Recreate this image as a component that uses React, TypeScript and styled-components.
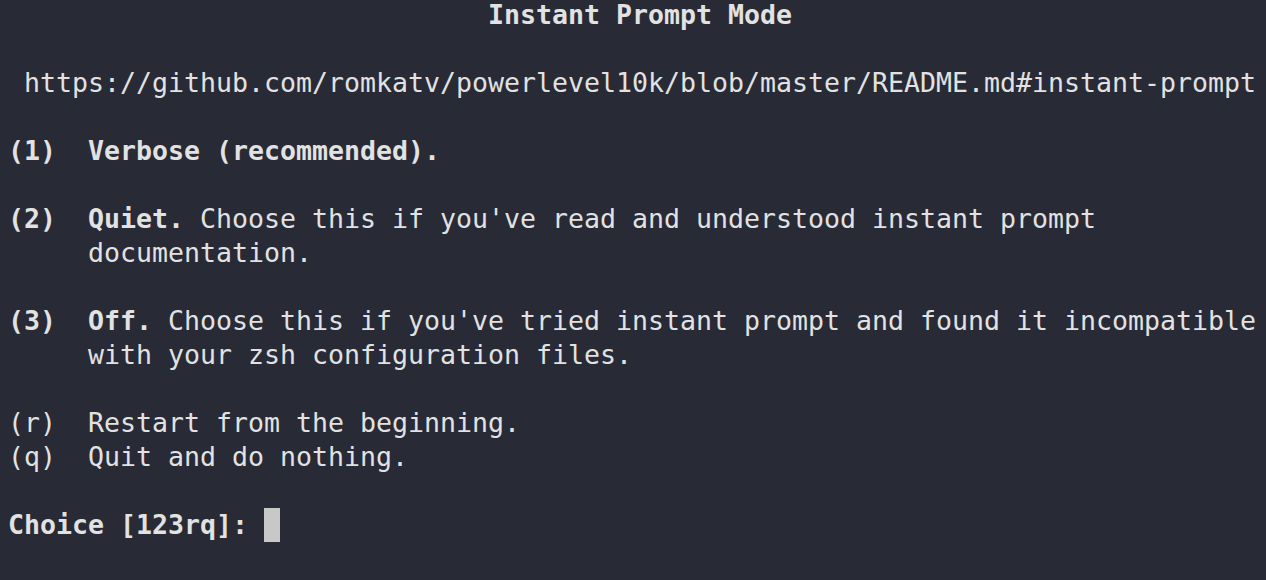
import React from "react";
import styled, { createGlobalStyle } from "styled-components";

const Global = createGlobalStyle`
  html, body {
    margin: 0;
    padding: 0;
    background: #282a36;
    overflow: hidden;
  }
`;

const Screen = styled.div`
  width: 1266px;
  height: 580px;
  box-sizing: border-box;
  background: #282a36;
  color: #e2e2e2;
  font-family: "DejaVu Sans Mono", monospace;
  font-size: 26.58px;
  padding: 0 0 0 8px;
  overflow: hidden;
`;

const Lines = styled.div`
  display: flex;
  flex-direction: column;
  margin-top: -2px;
`;

const Row = styled.div`
  height: 34px;
  line-height: 34px;
  white-space: pre;
`;

const Strong = styled.span`
  font-weight: bold;
`;

const Cursor = styled.span`
  display: inline-block;
  width: 16px;
  height: 34px;
  background: #c8c8c8;
  vertical-align: top;
`;

export default function App() {
  return (
    <>
      <Global />
      <Screen>
        <Lines>
          <Row>
            {" ".repeat(30)}
            <Strong>Instant Prompt Mode</Strong>
          </Row>
          <Row> </Row>
          <Row> https://github.com/romkatv/powerlevel10k/blob/master/README.md#instant-prompt</Row>
          <Row> </Row>
          <Row>
            <Strong>(1)  Verbose (recommended).</Strong>
          </Row>
          <Row> </Row>
          <Row>
            <Strong>(2)  Quiet.</Strong> Choose this if you've read and understood instant prompt
          </Row>
          <Row>     documentation.</Row>
          <Row> </Row>
          <Row>
            <Strong>(3)  Off.</Strong> Choose this if you've tried instant prompt and found it incompatible
          </Row>
          <Row>     with your zsh configuration files.</Row>
          <Row> </Row>
          <Row>(r)  Restart from the beginning.</Row>
          <Row>(q)  Quit and do nothing.</Row>
          <Row> </Row>
          <Row>
            <Strong>Choice [123rq]: </Strong>
            <Cursor />
          </Row>
        </Lines>
      </Screen>
    </>
  );
}
